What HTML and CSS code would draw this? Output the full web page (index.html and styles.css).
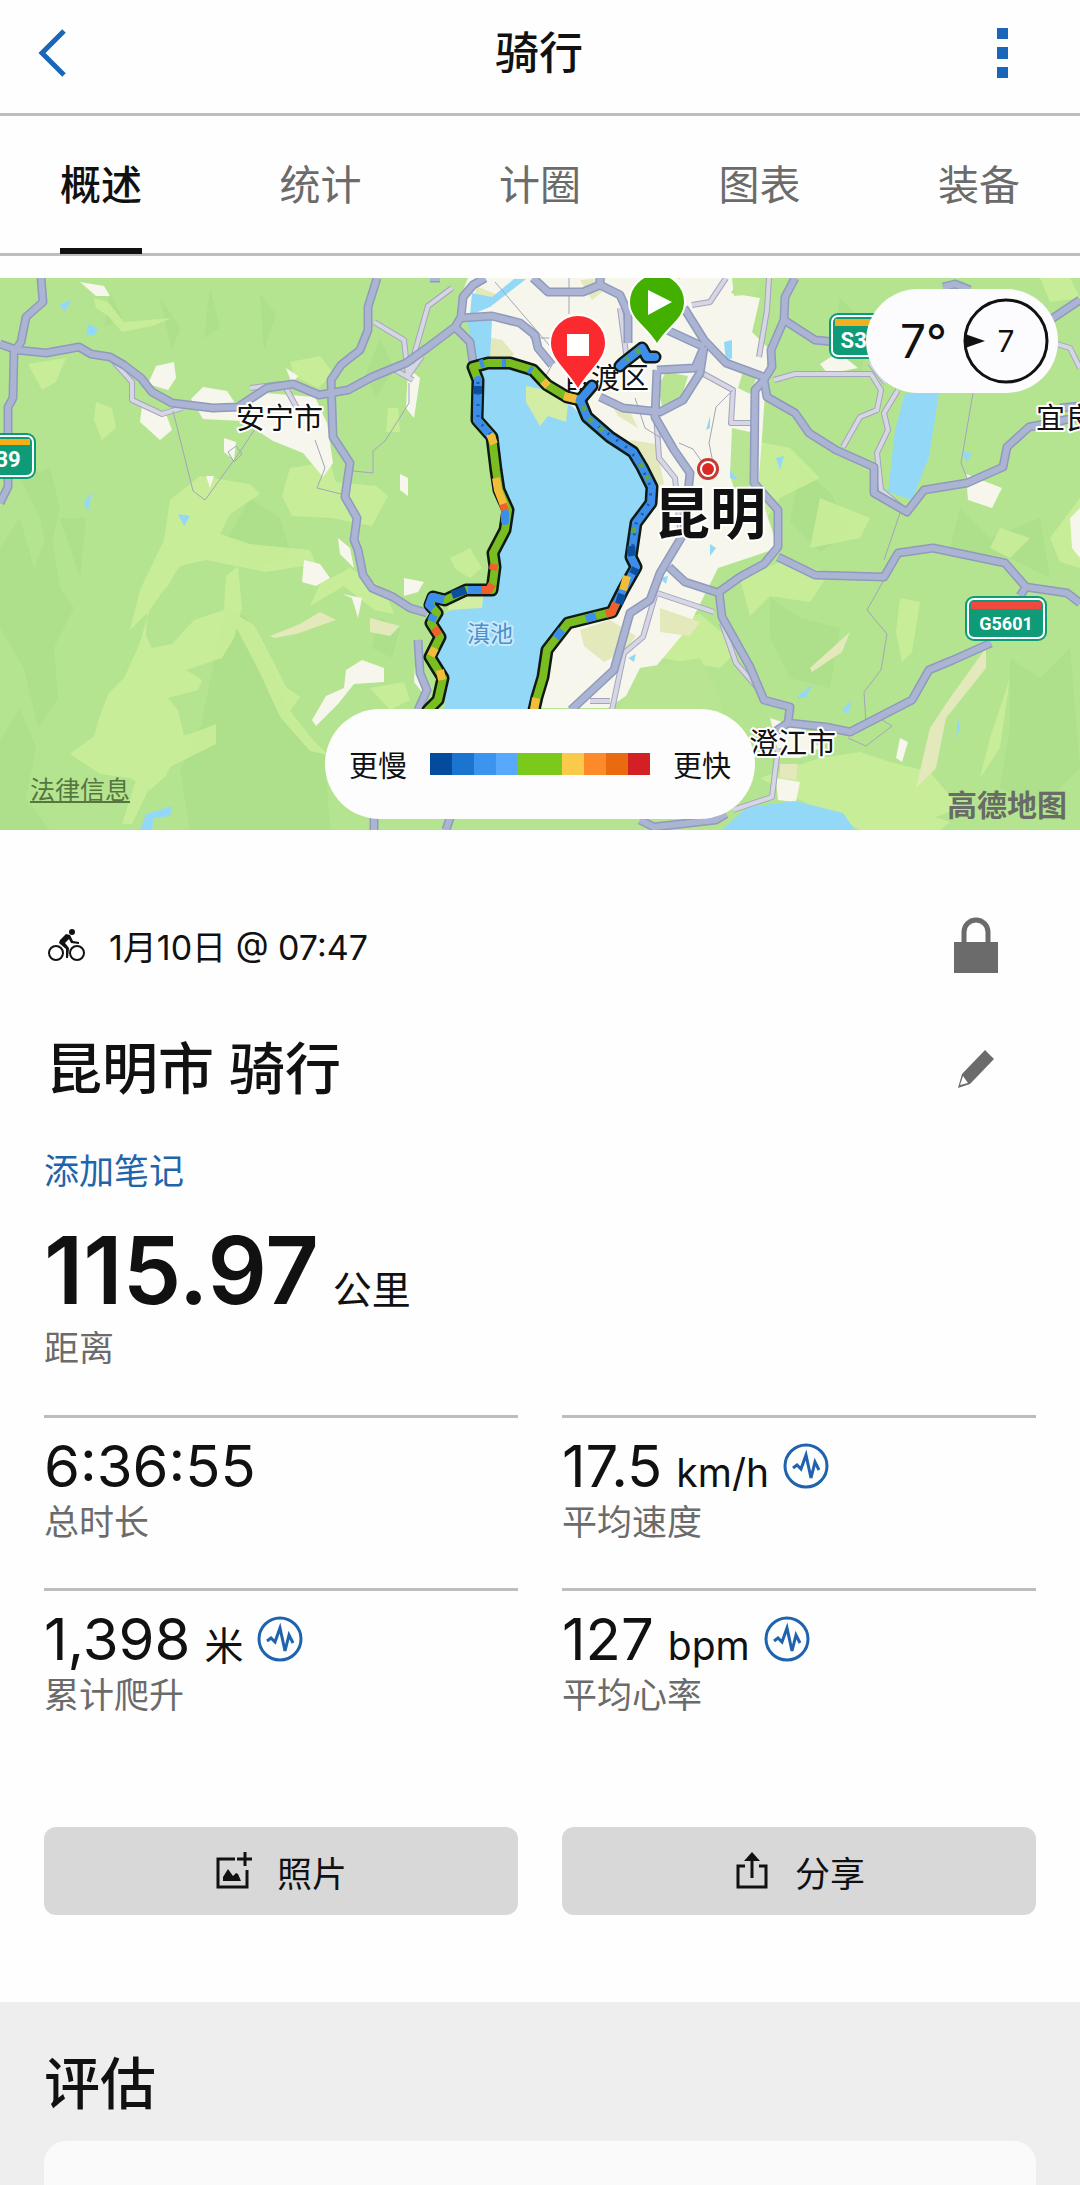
FILE: index.html
```html
<!DOCTYPE html>
<html lang="zh-CN">
    <head>
        <meta charset="utf-8">
        <meta name="viewport" content="width=device-width, initial-scale=1">
        <title>骑行</title>
        <link rel="stylesheet" href="styles.css">
    </head>
    <body>
        <header id="topo">
            <button class="icon-btn" aria-label="返回">
                <svg width="28" height="48" viewBox="0 0 28 48"><path d="M26 2L4 24l22 22" fill="none" stroke="#1a66b8" stroke-width="5"/></svg>
            </button>
            <h1>骑行</h1>
            <button class="icon-btn" aria-label="更多">
                <svg width="11" height="50" viewBox="0 0 11 50" fill="#1a66b8"><path d="M0 0h11v11H0zM0 19h11v12H0zM0 39h11v11H0z"/></svg>
            </button>
        </header>

        <nav id="tabs">
            <a class="ativo" href="#">概述</a>
            <a href="#">统计</a>
            <a href="#">计圈</a>
            <a href="#">图表</a>
            <a href="#">装备</a>
        </nav>

        <div id="mapa">
            <svg class="mapa-svg" viewBox="0 0 1080 552" role="img" aria-label="路线地图">
                <rect width="1080" height="552" fill="#b5e491"/>

                <!-- hill shading -->
                <g fill="#a7d985" opacity=".45">
                    <path d="M0 270l20-30 14 50 16-40 10 60 14 20-20 40 4 50-20 30-14-60-24-40z"/>
                    <path d="M20 200l20 40 8 40 12-50-10-40zM60 240l20 60 6-60z"/>
                    <path d="M225 330l20 8 25 40 20 60 35 40 5 74H190l-10-60 20-40z"/>
                    <path d="M160 20l20 30-8 24zM260 16l16 20-12 36zM110 14l12 26-18 10zM210 10l10 40-16 10z"/>
                    <path d="M250 220l30 20 12 40-40 10-24-30zM380 60l14 30-18 30-10-24z"/>
                    <path d="M770 320l30 20 40 10-10 60-40-10-20-40zM840 20l30 30-10 50-30-20z"/>
                    <path d="M1010 380l30 20 30-30 10 120-40 40-40-20 10-60zM800 190l30 24 20 40-30 20-30-30z"/>
                    <path d="M960 230l30 30 50-20 10 60-40-20-60-10zM620 460l40 20 60-40 20 40-40 50-60-10z"/>
                    <path d="M20 430l16 40-10 50 24 32H0v-90zM380 340l20 10-8 30-20-10z"/>
                </g>

                <!-- light vegetation -->
                <g fill="#cdf09c" opacity=".8">
                    <path d="M94 20l14 4 16 20 48-4-20 8-30 6-14-16-12-8zM28 86l38-6-10 24-14 8z"/>
                    <path d="M96 124l16 6 4 20-14 12-8-20zM290 84l30-6 14 18-16 14-24-12z"/>
                    <path d="M170 222l30-24 50 8 10 10-30 20-10 20 30 10 60 6 6 14-50 8-60-12-26 6-30 44-20 20 10-40 24-50z"/>
                    <path d="M290 190l40-6 6 20 40 4 12 10-16 30-40-8-40-2-10-20zM388 130l10 0 2 24-14 0z"/>
                    <path d="M182 282l-14 26-16 16-12 40-4 10-12 26-16 16-10 28-4 14-24 18 30 20 30 4 20 12 16-14 18-40-6-26-10-12 30-8 4-10-16-10 36-12 12-20 8-30-4-42-12 10-2 34-30 10-22 24-20 4-6-12 2-36 16-30z"/>
                    <path d="M234 335l20 12 18 34 14 28 14 10-10 14 24 30 14 14-18-4-30-34-20-44-24-46zM130 470l60-14 26-10 0 20-60 30-24 50-10 0 16-50z"/>
                    <path d="M320 306l30-16 34 20 10 26-20-4-30-24-34 20z"/>
                    <path d="M370 410l34-6 6 18-20 10zM450 280l20-10 12 20-12 10-14-8z"/>
                    <path d="M740 300l40-16 50 10-20 30-40-6-20 20zM900 320l20 4-8 50-10 10-6-30z"/>
                    <path d="M760 500l60-20 40-6 30 10 40 10 30 36-60 22H860l-60-30zM1050 260l30-40v70l-20-6z"/>
                    <path d="M820 220l50 20-10 20-50 10zM900 90l36-40 20 30-10 30-40 0zM1000 250l30 10-20 20-20-10z"/>
                    <path d="M740 160l50 10 30 30-40 20-20 30-20-30zM650 350l50-14 40 34-20 20-60-10zM1010 400l-20 60-10 40 20-30z"/>
                    <path d="M450 370l14 40-12 22 8-40zM1040 0h30l10 20-30 4zM840 534l50-10 60 20-10 8h-80z"/>
                </g>

                <!-- built-up areas -->
                <g fill="#f6f6ec">
                    <path d="M468 0h210l40 20 50 50-6 90-4 50 20 60-60 20-30 60-50 60-30 20H530l60-230-60-80-50-40-20-60z"/>
                    <path d="M700 10l60 10-14 60-40 20zM680 0h60l-24 40-34-10z"/>
                    <path d="M235 125l30-10 50 4 12 26 6 40-10 14-20-24-30-12-30-20-40-2-12-20 12-12 24 4z"/>
                    <path d="M156 88l18-4 2 16-8 12-20-6zM142 128l24 8 6 16-12 10-20-18zM80 4l24 4 6 10-14 0z"/>
                    <path d="M224 160l12 4-2 18-10-8zM206 198l8 0-4 12zM400 196l8 4 0 18-8-6zM286 90l12 8-6 8z"/>
                    <path d="M304 282l16 4 10 14-14 8-14-4zM346 392l16-10 22 8 0 14-30 2-16 20-22 22-4-6 14-24 18-8z"/>
                    <path d="M338 260l12 10 4 20-14-14zM404 300l20 4-6 10-14 4zM342 316l20 4-4 20-6-20z"/>
                    <path d="M966 196l36 14-10 20-24-8zM838 74l20 16-30 6-8-10zM720 106l10 0-12 10zM1070 240l10-10v50l-8-10zM408 90l12 10-6 40-8-10zM416 370l6 30 10 10-10 4-8-10z"/>
                    <path d="M770 440l30 10 20 20-20 10-20 0zM776 500l24 4-4 20-18-2zM900 460l8 4-6 20-6-4z"/>
                </g>

                <!-- green patches inside the city -->
                <g fill="#b9e592">
                    <path d="M666 94l22 4-6 20-20 10-4-20zM732 150l18 4 0 60-10 14-10-30zM732 0h30l-8 16-20 2zM640 390l60-10 20 40 10 60-60 20-30-30-20-40zM744 90l14 6-8 20-12-6z"/>
                </g>

                <!-- bare ground -->
                <g fill="#e3e9bb">
                    <path d="M482 58l20 4 12 14-8 10-20-6zM476 8l20 8-6 10-16 0zM580 2l26-2-4 14-10 8zM630 162l26 4 8 40-12 4-10-30z"/>
                    <path d="M580 352l30-10 26 16-12 16-20 10-20-16zM660 330l40 14-10 14-30-4zM370 340l30 8-10 10-20-4z"/>
                    <path d="M810 390l40-36-8 20-30 20zM270 358l30-12 20-12 16 8-40 14-22 4zM950 420l36-50 0 20-40 50-10 50-20 20 14-60z"/>
                    <path d="M780 486l18 0-2 16-16-2zM608 120l20 10 10 20-20-12z"/>
                </g>

                <!-- water -->
                <g fill="#93d8f7">
                    <path d="M483 92l40-4 20 24 30 17 30 30 34 16 10 17 7 13-2 24-16 23-3 17 2 16-12 20-7 27-48 10-14 23-11 34-8 38h-91l2-32-14-23 3-43 45-17 10-17 7-33 9-27-9-40-3-26-14-27-5-50z"/>
                    <path d="M467 42h25l-2 38-14 2zM472 15l20 4 22-18 12 0-36 28-20 8z"/>
                    <path d="M905 115h34l-10 64-17 43-24-8 7-62z"/>
                    <path d="M722 552l25-23 48-6 48 12 12 17zM140 552l6-16 26-8-2 10-16 2-2 12z"/>
                    <path d="M724 64l8-2 0 18-6 4zM710 138l-4 14 4-2zM60 26l12-4-8 12zM88 46l10 4-4 8-8-2zM84 224l8-10-4 20zM178 236l12 2-6 10z"/>
                    <path d="M660 300l8-2-2 8zM628 380l8-4-2 8zM796 420l16-14-6 14zM842 432l10-10-4 14zM776 180l8-2-4 14zM730 192l8 10-8-2zM710 266l6 4-6 8zM962 172l10 4-6 8zM956 460l2-20 2 10z"/>
                </g>
                <g fill="#d4eda4">
                    <path d="M526 108l20 4 22 14-2 18-18-6-8 10-14-24zM450 320l34-10-2 20-34 2z"/>
                </g>

                <!-- minor roads -->
                <g fill="none" stroke="#a4a4bd" stroke-width="6" stroke-linejoin="round">
                    <path d="M374 44l30 18 4 36 20-70 24-18M114 84l18 20 0 18 30 14 20-6M250 110l30-4M286 110l12 22M408 98l14-20M395 92l18 10"/>
                    <path d="M769 0l-2 32-8 47M726 0l-16 24-18 3M702 95l31 17-2 33h24M774 102l21-6h76l10 16-4 20-17 7-17 30M898 112l-14 23 4 17-11 23 4 37 26 22"/>
                    <path d="M657 315l57 19M655 318l-12 41-19 16-12 57M655 120l4 60 16 20 6 60M778 470l-6 49-39 13M722 345l14 40 26 30M620 30l8 60M590 423l20 0M870 85l16 20M1050 64l20 6 10 20"/>
                </g>
                <g fill="none" stroke="#d6d6e4" stroke-width="4" stroke-linejoin="round">
                    <path d="M374 44l30 18 4 36 20-70 24-18M114 84l18 20 0 18 30 14 20-6M250 110l30-4M286 110l12 22M408 98l14-20M395 92l18 10"/>
                    <path d="M769 0l-2 32-8 47M726 0l-16 24-18 3M702 95l31 17-2 33h24M774 102l21-6h76l10 16-4 20-17 7-17 30M898 112l-14 23 4 17-11 23 4 37 26 22"/>
                    <path d="M657 315l57 19M655 318l-12 41-19 16-12 57M655 120l4 60 16 20 6 60M778 470l-6 49-39 13M722 345l14 40 26 30M620 30l8 60M590 423l20 0M870 85l16 20M1050 64l20 6 10 20"/>
                </g>
                <g fill="none" stroke="#a3a5bc" stroke-width="1">
                    <path d="M173 133l20 80 12 9 32-44 20-30M228 174l8-6 6 8-8 8zM315 162l10 28-8 20 24 6M409 105v20l-24 38-12 10v22l-20-2M495 4l60 70M569 0v36M552 87l-8 14M530 60h20"/>
                    <path d="M733 112l-17 17-7 36 4 20M885 300l-18 32 20 24-6 36-17 22 2 32M973 115l-12 70 8 20M900 235l-16 47M848 460l18 8 26-20-10-6M679 165l14 6 14 20M635 120l10 30 16 10"/>
                </g>

                <!-- highways: dark edge, then the fill -->
                <g fill="none" stroke="#8f9abd" stroke-width="9" stroke-linejoin="round">
                    <path d="M41 0l2 24-17 15-5 25-7 10-1 46-5 9v80l-8 16M0 66l17 6 29 3 33-6 12 7 19 3 14 8 17 13 11 14 20 11 41 5 25-1 29-19 26-4 26 11 29-5 24-13 34-14 21-15 28-21 6-10 2-20 10-12 12-7"/>
                    <path d="M377 0l-9 29v23l-8 20-19 15-10 15 2 57 17 26-5 34 12 21-3 22 4 10 5 25 9 13 21 9 17 11 17 5M418 362l2 33 7 17-9 20M461 40l31-2 28 7 15 12 3 13 14 17M456 50l14 14 3 20"/>
                    <path d="M533 0l15 14h35l17-7 20 10 8 18v30M600 0v7M600 119l23 11 37 4 23-12 17-27 4-26M795 0l-10 19-1 23-13 30 1 17-8 13 3 17 28 16 14 20 27 17 38 17v26l33 19 17-22 43-7 36-16 4-20 22-20 51-10"/>
                    <path d="M684 30l20 32 22 23 38 14M667 52l37 17M764 102l-9 10-1 93 24 27v37l-14 17-24 13-21 15 3 25 28 50 14 33 26 7-2 16 38 4 24 5 62-32 17-30 24-10 38-17M788 445l-18 12"/>
                    <path d="M657 92l-2 47 19 33 16 23-6 60-24 40-10 27-20 13-16 57-43 40M669 289l16 15 34 11M657 92l38-2 9-21M778 279l37 18 69 2 14-24 35-5 72 15 21 24 41 6 13 10M784 42l31 20 20 2"/>
                    <path d="M1026 309l-6 9M1050 42l30-20M943 9l12-3 15 6M374 552v-12M446 552l4-12M640 542l14 7 62-7 10-6M430 0h10M1060 130l20-2"/>
                </g>
                <g fill="none" stroke="#abb4d2" stroke-width="6" stroke-linejoin="round">
                    <path d="M41 0l2 24-17 15-5 25-7 10-1 46-5 9v80l-8 16M0 66l17 6 29 3 33-6 12 7 19 3 14 8 17 13 11 14 20 11 41 5 25-1 29-19 26-4 26 11 29-5 24-13 34-14 21-15 28-21 6-10 2-20 10-12 12-7"/>
                    <path d="M377 0l-9 29v23l-8 20-19 15-10 15 2 57 17 26-5 34 12 21-3 22 4 10 5 25 9 13 21 9 17 11 17 5M418 362l2 33 7 17-9 20M461 40l31-2 28 7 15 12 3 13 14 17M456 50l14 14 3 20"/>
                    <path d="M533 0l15 14h35l17-7 20 10 8 18v30M600 0v7M600 119l23 11 37 4 23-12 17-27 4-26M795 0l-10 19-1 23-13 30 1 17-8 13 3 17 28 16 14 20 27 17 38 17v26l33 19 17-22 43-7 36-16 4-20 22-20 51-10"/>
                    <path d="M684 30l20 32 22 23 38 14M667 52l37 17M764 102l-9 10-1 93 24 27v37l-14 17-24 13-21 15 3 25 28 50 14 33 26 7-2 16 38 4 24 5 62-32 17-30 24-10 38-17M788 445l-18 12"/>
                    <path d="M657 92l-2 47 19 33 16 23-6 60-24 40-10 27-20 13-16 57-43 40M669 289l16 15 34 11M657 92l38-2 9-21M778 279l37 18 69 2 14-24 35-5 72 15 21 24 41 6 13 10M784 42l31 20 20 2"/>
                    <path d="M1026 309l-6 9M1050 42l30-20M943 9l12-3 15 6M374 552v-12M446 552l4-12M640 542l14 7 62-7 10-6M430 0h10M1060 130l20-2"/>
                </g>

                <!-- place names -->
                <g class="lugar">
                    <text x="236" y="151">安宁市</text>
                    <text x="562" y="111">官渡区</text>
                    <text x="1036" y="151">宜良县</text>
                    <text x="749" y="476">澄江市</text>
                </g>
                <text class="lugar-capital" x="654" y="256">昆明</text>
                <text class="lugar-lago" x="467" y="364">滇池</text>
                <circle cx="708" cy="191" r="11" fill="#c33b36"/>
                <circle cx="708" cy="191" r="8" fill="#fff"/>
                <circle cx="708" cy="191" r="6" fill="#d92b26"/>

                <!-- ridden track -->
                <g fill="none" stroke-linejoin="round" stroke-linecap="round">
                    <g stroke="#101a14" stroke-width="13">
                        <path d="M655 79h-8l-5-9-19 15-3 3M592 108l-12 14-13-3-20-12-14-15-23-7-22 0-15 4 5 13-1 40 15 17 4 33 3 20 9 20-3 20-12 23 2 14-3 23-26 0-21 10-12-3-3 8 7 8-6 10 9 14-10 20 13 21-5 22-10 10"/>
                        <path d="M580 122l7 17 23 20 23 15 9 15 10 20-1 16-15 20-5 34 5 10-13 23-11 22-44 11-21 27-4 27-6 20-3 13"/>
                    </g>
                    <g stroke="#79bd20" stroke-width="8">
                        <path d="M580 122l-13-3-20-12-14-15-23-7-22 0-15 4 5 13-1 40 15 17 4 33 3 20 9 20-3 20-12 23 2 14-3 23-26 0-21 10-12-3-3 8 7 8-6 10 9 14-10 20 13 21-5 22-10 10"/>
                        <path d="M612 334l-44 11-21 27-4 27-6 20-3 13"/>
                    </g>
                    <g stroke="#3d8ee8" stroke-width="8">
                        <path d="M655 79h-8l-5-9-19 15-3 3M592 108l-12 14M478 102l-1 40 13 15M505 235v8"/>
                        <path d="M580 122l7 17 23 20 23 15 9 15 10 20-1 16-15 20-5 34 5 10-13 23-11 22"/>
                    </g>
                    <g stroke="#f3bd3c" stroke-width="8" stroke-linecap="butt">
                        <path d="M576 121l-12-3M490 156l4 10M496 200l2 12 7 18M440 392l2 10M435 370l-4 8M627 298l-4 14M536 420l-2 12M548 108l-5-5"/>
                    </g>
                    <g stroke="#f0602a" stroke-width="8" stroke-linecap="butt">
                        <path d="M503 226l2 6M494 286l-1 6M492 306l-3 6h-7M434 350l5 7M616 325l-4 9-6 2"/>
                    </g>
                    <g stroke="#0d4f9f" stroke-width="8" stroke-linecap="butt">
                        <path d="M466 312l-14 5M631 268l1 10M622 316l-3 10M478 108v8M636 290l-3 6"/>
                    </g>
                    <g stroke="#3d8ee8" stroke-width="8" stroke-linecap="butt">
                        <path d="M482 312l-14 0M444 322l-12-3-3 8 4 4M596 338l-10 3M562 352l-6 8M434 337l-3 6M502 85l4 0M529 91l3 2M480 86l4-1"/>
                    </g>
                    <path d="M478 104v38l12 14M590 142l40 30 12 18 9 20-1 14-14 22-4 26" stroke="#1a5cb0" stroke-width="3" stroke-dasharray="2 9" stroke-linecap="butt"/>
                    <path d="M583 128l4 11 23 20M640 185l12 24M634 250l-3 14M640 72l-14 10" stroke="#5fa64a" stroke-width="5" stroke-dasharray="5 9" stroke-linecap="butt"/>
                </g>

                <!-- road shields -->
                <g class="placa">
                    <rect x="-50" y="155" width="86" height="46" rx="9" fill="#0f9b78"/>
                    <rect x="-47" y="158" width="80" height="40" rx="6" fill="#0f9b78" stroke="#fff" stroke-width="2"/>
                    <path d="M-44 161h74v6h-74z" fill="#f5ae16"/>
                    <text x="8" y="189">39</text>
                    <rect x="829" y="35" width="86" height="46" rx="9" fill="#0f9b78"/>
                    <rect x="832" y="38" width="80" height="40" rx="6" fill="#0f9b78" stroke="#fff" stroke-width="2"/>
                    <path d="M835 41h74v7h-74z" fill="#f0b022"/>
                    <text x="860" y="70">S35</text>
                    <rect x="965" y="318" width="82" height="45" rx="9" fill="#0f9b78"/>
                    <rect x="968" y="321" width="76" height="39" rx="6" fill="#0f9b78" stroke="#fff" stroke-width="2"/>
                    <path d="M971 324h70v7h-70z" fill="#f04a3e"/>
                    <text class="placa-longa" x="1006" y="352">G5601</text>
                </g>

                <!-- start and finish pins -->
                <g stroke="#fff" stroke-width="2">
                    <path d="M657 67c-10-18-28-25-28-43a28 28 0 0 1 56 0c0 18-18 25-28 43z" fill="#43b000"/>
                    <path d="M578 112c-10-19-28-29-28-47a28 28 0 0 1 56 0c0 18-18 28-28 47z" fill="#fb2a2f"/>
                </g>
                <path d="M648 12v25l24-13z" fill="#fff"/>
                <path d="M567 56h22v22h-22z" fill="#fff"/>
            </svg>

            <div id="clima">
                <span>7°</span>
                <svg width="86" height="86" viewBox="0 0 86 86">
                    <circle cx="43" cy="43" r="41" fill="none" stroke="#111" stroke-width="3"/>
                    <path d="M2 36l20 7-20 7z" fill="#111"/>
                    <text x="43" y="54" text-anchor="middle" font-size="30" fill="#111">7</text>
                </svg>
            </div>

            <div id="legenda">
                <span>更慢</span>
                <ul>
                    <li class="azul-1"></li>
                    <li class="azul-2"></li>
                    <li class="azul-3"></li>
                    <li class="azul-4"></li>
                    <li class="verde"></li>
                    <li class="verde"></li>
                    <li class="amarelo"></li>
                    <li class="laranja-1"></li>
                    <li class="laranja-2"></li>
                    <li class="vermelho"></li>
                </ul>
                <span>更快</span>
            </div>

            <a id="legal" href="#">法律信息</a>
            <span id="marca">高德地图</span>
        </div><!-- the end mapa -->

        <main>
            <div class="linha">
                <p id="data">
                    <svg width="40" height="34" viewBox="0 0 40 34" fill="none" stroke="#111" stroke-width="2">
                        <circle cx="9" cy="25" r="7"/>
                        <circle cx="30" cy="25" r="7"/>
                        <circle cx="25" cy="4" r="3" fill="#111" stroke="none"/>
                        <path d="M13 12l6-6 4 1 3 6 6 1v2l-8-1-2-4-4 4 4 5-1 10h-2v-9l-7-6z" fill="#111" stroke="none"/>
                    </svg>
                    1月10日 @ 07:47
                </p>
                <button class="icon-btn" aria-label="隐私">
                    <svg width="44" height="56" viewBox="0 0 44 56"><path d="M0 25h44v31H0z" fill="#6b6b6b"/><path d="M10 26V15a12 12 0 0 1 24 0v11" fill="none" stroke="#6b6b6b" stroke-width="5"/></svg>
                </button>
            </div>

            <div class="linha linha-titulo">
                <h2>昆明市 骑行</h2>
                <button class="icon-btn" aria-label="编辑">
                    <svg width="44" height="40" viewBox="0 0 44 40" fill="#6b6b6b"><path fill-rule="evenodd" d="M31 1l9 9-24 25-12 4 4-14zM9 27l-3 9 8-2z"/></svg>
                </button>
            </div>

            <a id="nota" href="#">添加笔记</a>

            <div id="distancia">
                <p class="valor">115.97 <span>公里</span></p>
                <p class="rotulo">距离</p>
            </div>

            <div id="dados">
                <div class="dado">
                    <p class="valor">6:36:55</p>
                    <p class="rotulo">总时长</p>
                </div>
                <div class="dado">
                    <p class="valor">17.5 <span>km/h</span>
                        <svg width="46" height="46" viewBox="0 0 46 46" fill="none" stroke="#1f62ae" stroke-width="3"><circle cx="23" cy="23" r="21"/><path d="M10 25l4-3 4 4 5-14 5 23 4-16 4 8"/></svg>
                    </p>
                    <p class="rotulo">平均速度</p>
                </div>
                <div class="dado">
                    <p class="valor">1,398 <span>米</span>
                        <svg width="46" height="46" viewBox="0 0 46 46" fill="none" stroke="#1f62ae" stroke-width="3"><circle cx="23" cy="23" r="21"/><path d="M10 25l4-3 4 4 5-14 5 23 4-16 4 8"/></svg>
                    </p>
                    <p class="rotulo">累计爬升</p>
                </div>
                <div class="dado">
                    <p class="valor">127 <span>bpm</span>
                        <svg width="46" height="46" viewBox="0 0 46 46" fill="none" stroke="#1f62ae" stroke-width="3"><circle cx="23" cy="23" r="21"/><path d="M10 25l4-3 4 4 5-14 5 23 4-16 4 8"/></svg>
                    </p>
                    <p class="rotulo">平均心率</p>
                </div>
            </div><!-- the end dados -->

            <div id="acoes">
                <button>
                    <svg width="38" height="38" viewBox="0 0 38 38" fill="none" stroke="#111" stroke-width="3"><path d="M20 7H3v28h29V18M30 0v14M22 7h15"/><path d="M8 29v-4l5-8 5 7 3-3 2 1 3 7z" fill="#111" stroke="none"/></svg>
                    照片
                </button>
                <button>
                    <svg width="38" height="38" viewBox="0 0 38 38" fill="none" stroke="#111" stroke-width="3"><path d="M12 14H5v21h28V14h-7M19 26V5"/><path d="M19 0l8 9H11z" fill="#111" stroke="none"/></svg>
                    分享
                </button>
            </div>
        </main>

        <section id="avaliacao">
            <h2>评估</h2>
            <div class="cartao"></div>
        </section>
    </body>
</html>
```

FILE: styles.css
```css
*{
    box-sizing: border-box;
    margin: 0;
    padding: 0;
    font-family: Inter, "Noto Sans CJK SC", sans-serif;
}

body{
    display: flex;
    flex-direction: column;
    min-height: 100vh;
    background-color: #fefefe;
    color: #111;
}

button{
    border: 0;
    background: none;
    color: #111;
}

a{
    text-decoration: none;
}

svg{
    display: block;
    flex-shrink: 0;
}

.icon-btn{
    display: flex;
    align-items: center;
    justify-content: center;
}

/* header */
#topo{
    display: flex;
    align-items: center;
    justify-content: space-between;
    height: 116px;
    padding: 0 72px 8px 38px;
    border-bottom: 3px solid #bdbdbd;
}

#topo h1{
    font-size: 44px;
    line-height: 60px;
    font-weight: 500;
    text-align: center;
    flex-grow: 1;
    padding-left: 15px;
}

#tabs{
    display: flex;
    justify-content: space-between;
    height: 140px;
    padding: 0 60px;
    border-bottom: 3px solid #bdbdbd;
}

#tabs a{
    height: 138px;
    line-height: 138px;
    font-size: 41px;
    color: #6b6b6b;
}

#tabs a.ativo{
    color: #111;
    font-weight: 500;
    border-bottom: 6px solid #111;
}

/* map */
#mapa{
    position: relative;
    margin-top: 22px;
}

.mapa-svg{
    width: 100%;
    height: auto;
}

.lugar, .lugar-capital, .lugar-lago{
    font-size: 29px;
    fill: #111;
    stroke: #fff;
    stroke-width: 4px;
    stroke-linejoin: round;
    paint-order: stroke;
}

.lugar-capital{
    font-size: 56px;
    font-weight: 700;
}

.lugar-lago{
    font-size: 23px;
    fill: #4b8fcb;
    stroke: #c9eafa;
}

.placa text{
    font-family: "Liberation Sans Narrow", Roboto, sans-serif;
    font-size: 22px;
    font-weight: 700;
    text-anchor: middle;
    fill: #fff;
}

.placa .placa-longa{
    font-size: 18px;
}

#clima{
    position: absolute;
    top: 11px;
    right: 22px;
    display: flex;
    align-items: center;
    gap: 16px;
    height: 104px;
    padding: 0 9px 0 34px;
    border-radius: 52px;
    background-color: #fcfcfe;
    font-size: 46px;
}

#legenda{
    position: absolute;
    bottom: 11px;
    left: 50%;
    transform: translateX(-50%);
    display: flex;
    align-items: center;
    gap: 23px;
    height: 110px;
    padding: 0 24px;
    border-radius: 55px;
    background-color: #fcfdfc;
    font-size: 29px;
    white-space: nowrap;
}

#legenda ul{
    display: flex;
    list-style: none;
}

#legenda li{
    width: 22px;
    height: 22px;
}

.azul-1{ background-color: #054b9d; }
.azul-2{ background-color: #1b74d0; }
.azul-3{ background-color: #3b95ef; }
.azul-4{ background-color: #57a9fb; }
.verde{ background-color: #7bc91b; }
.amarelo{ background-color: #f9ca4b; }
.laranja-1{ background-color: #fc8a2a; }
.laranja-2{ background-color: #ea6a10; }
.vermelho{ background-color: #d32024; }

#legal{
    position: absolute;
    left: 30px;
    bottom: 24px;
    font-size: 25px;
    color: #56763f;
    text-decoration: underline;
}

#marca{
    position: absolute;
    right: 13px;
    bottom: 5px;
    font-size: 30px;
    font-weight: 700;
    color: #686b66;
}

/* summary */
main{
    padding: 87px 44px;
}

.linha{
    display: flex;
    align-items: center;
    justify-content: space-between;
    height: 56px;
    padding-right: 38px;
}

#data{
    display: flex;
    align-items: center;
    gap: 22px;
    padding-left: 3px;
    font-size: 34px;
}

.linha-titulo{
    height: 72px;
    margin-top: 60px;
}

.linha-titulo h2{
    padding-left: 2px;
    font-size: 56px;
    line-height: 72px;
    font-weight: 500;
}

#nota{
    display: block;
    margin-top: 42px;
    font-size: 35px;
    line-height: 48px;
    color: #1f65ab;
}

.valor{
    display: flex;
    align-items: baseline;
    gap: 14px;
    font-size: 58px;
    line-height: 64px;
}

.valor span{
    font-size: 39px;
    line-height: 40px;
}

.valor svg{
    align-self: center;
}

.rotulo{
    margin-top: 4px;
    font-size: 35px;
    line-height: 40px;
    color: #6b6b6b;
}

#distancia{
    margin-top: 27px;
    padding-bottom: 47px;
}

#distancia .valor{
    font-size: 93px;
    line-height: 96px;
    font-weight: 600;
}

#distancia .valor span{
    font-weight: 400;
}

#distancia .rotulo{
    margin-top: 10px;
}

#dados{
    display: grid;
    grid-template-columns: 1fr 1fr;
    column-gap: 44px;
}

.dado{
    height: 173px;
    padding-top: 16px;
    border-top: 3px solid #bdbdbd;
}

#acoes{
    display: grid;
    grid-template-columns: 1fr 1fr;
    gap: 44px;
    margin-top: 66px;
}

#acoes button{
    display: flex;
    align-items: center;
    justify-content: center;
    gap: 24px;
    height: 88px;
    border-radius: 12px;
    background-color: #d8d8d8;
    font-size: 35px;
}

/* evaluation */
#avaliacao{
    display: flex;
    flex-direction: column;
    flex-grow: 1;
    padding: 46px 44px 0;
    background-color: #eee;
}

#avaliacao h2{
    font-size: 56px;
    line-height: 72px;
    font-weight: 500;
}

.cartao{
    flex-grow: 1;
    min-height: 44px;
    margin-top: 21px;
    border-radius: 22px 22px 0 0;
    background-color: #fafafa;
}
```
